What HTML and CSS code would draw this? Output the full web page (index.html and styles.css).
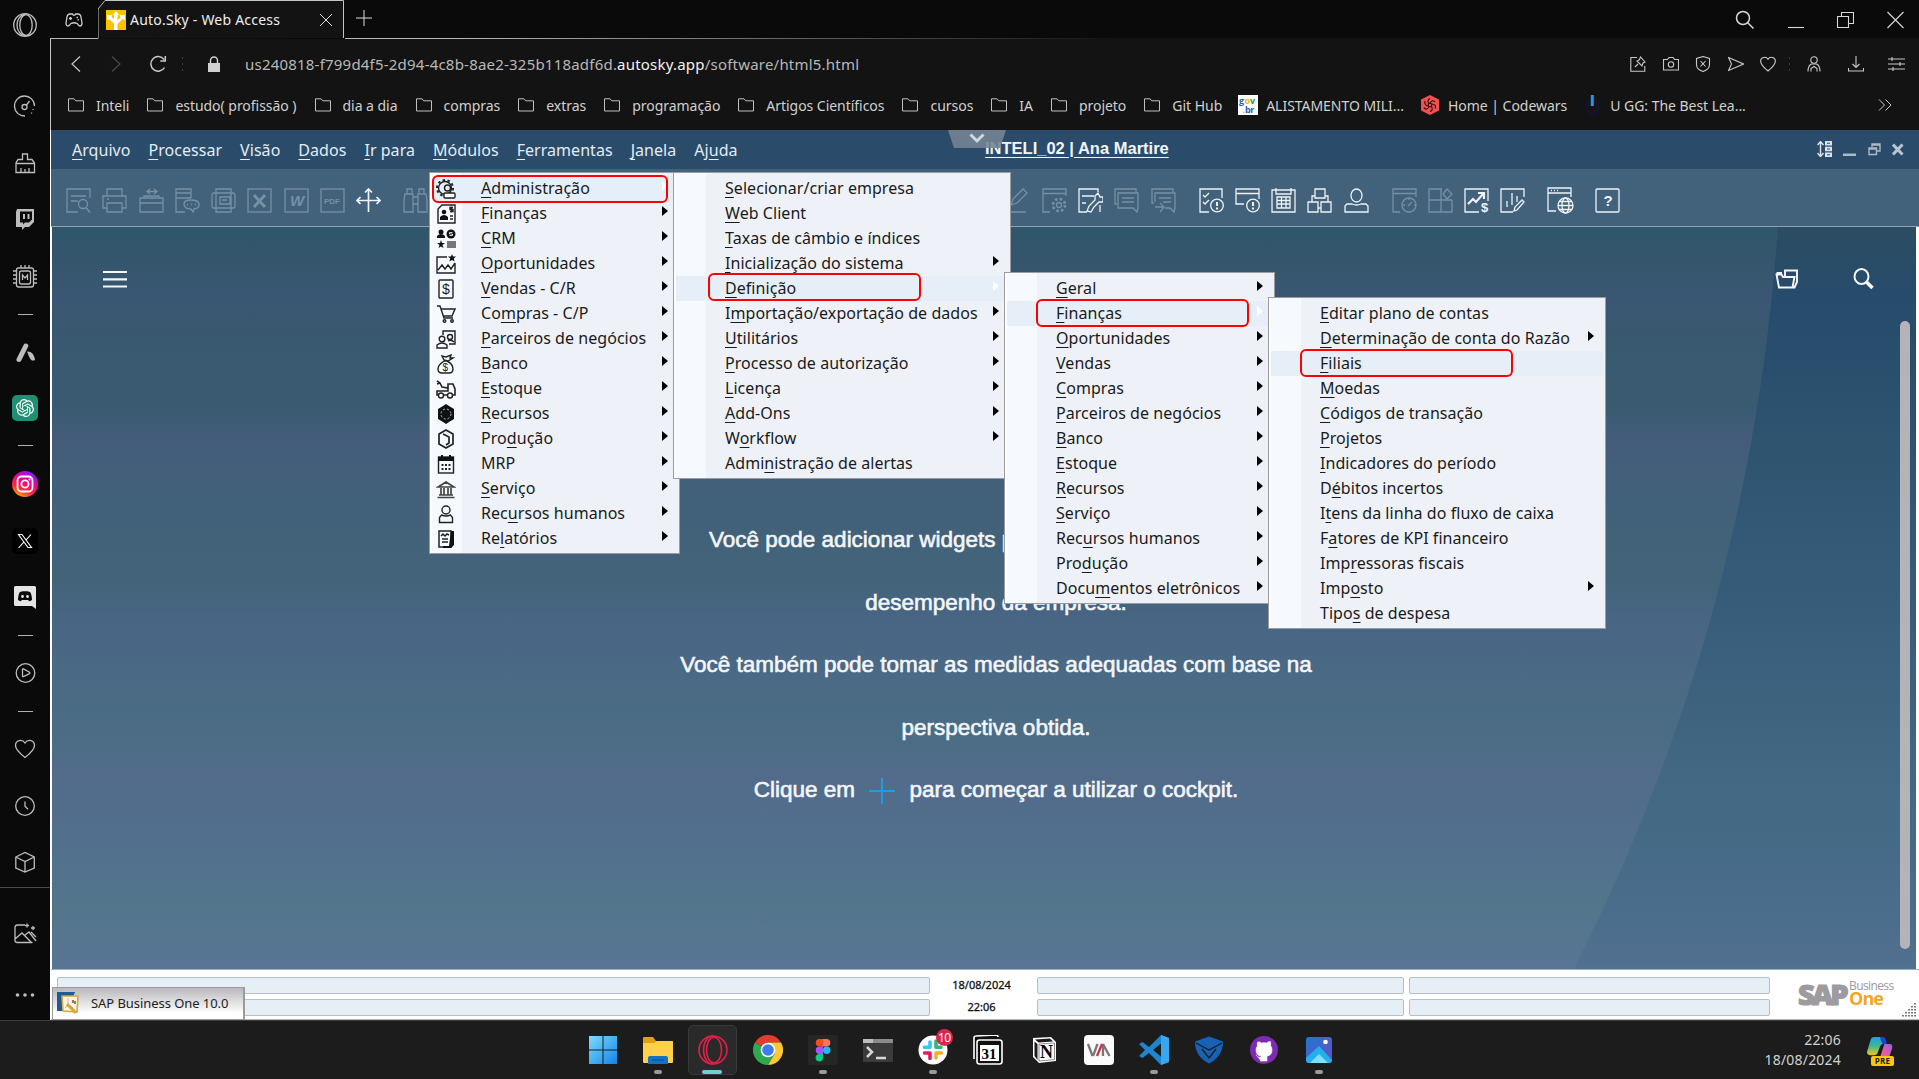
FILE: index.html
```html
<!DOCTYPE html>
<html lang="pt-BR">
<head>
<meta charset="utf-8">
<title>Auto.Sky - Web Access</title>
<link rel="stylesheet" href="styles.css">
</head>
<body>
<svg class="defs" width="0" height="0">
  <defs>
    <symbol id="folder" viewBox="0 0 16 14"><path d="M.5 13V.8h5.6l1.6 2h7.8V13z"/></symbol>
  </defs>
</svg>
<div class="screen">
  <aside class="rail">
    <svg class="ri first" viewBox="0 0 24 24"><circle cx="12" cy="12" r="11.3"/><ellipse cx="13" cy="12" rx="6.2" ry="10.4"/><path d="M12 1.500a8 10.500 0 0 0 0 21"/></svg>
    <svg class="ri gauge" viewBox="0 0 24 24"><path d="M12 22A10 10 0 1 1 21.500 12M20 15v1M18.500 18.500v1"/><circle cx="11.500" cy="13" r="2.500"/><path d="M13.500 11l3-4"/></svg>
    <svg class="ri" viewBox="0 0 24 24"><path d="M3 21.500V12l2-3.500h4.500V3h5v5.500H19l2.500 3.500v9.500zM3 12.500h18M8 21v-4M12 21v-3M16 21v-4"/></svg>
    <svg class="ri twitch" viewBox="0 0 24 24"><path class="f" d="M4 2h17v13l-5 5h-4l-3 3v-3H3V5z"/><path class="k" d="M7 4.500h12v8l-3 3h-4l-2 2v-2H7z"/><path class="b" d="M11 7v5M15.500 7v5"/></svg>
    <svg class="ri cpu" viewBox="0 0 24 24"><rect x="3.500" y="3" width="17" height="19" rx="2"/><rect x="6.500" y="6" width="11" height="13" rx="2"/><path d="M9.500 15v-5l2.500 3 2.500-3v5M0 6h3M0 10h3M0 14h3M0 18h3M21 6h3M21 10h3M21 14h3M21 18h3M8 3V0M12 3V0M16 3V0"/></svg>
    <i class="sep"></i>
    <svg class="ri" viewBox="0 0 24 24"><path d="M6 19.500L12.800 6" stroke-width="5" stroke-linecap="round"/><path class="f" d="M14 11.500c4-.5 7.500 3 8 8.500-4 2-5-1-8-8.500z"/></svg>
    <svg class="ri big chat" viewBox="0 0 26 26"><rect class="gpt" width="26" height="26" rx="5"/><path transform="translate(4 4) scale(.75)" fill="#fff" stroke="none" d="M22.2819 9.8211a5.9847 5.9847 0 0 0-.5157-4.9108 6.0462 6.0462 0 0 0-6.5098-2.9A6.0651 6.0651 0 0 0 4.9807 4.1818a5.9847 5.9847 0 0 0-3.9977 2.9 6.0462 6.0462 0 0 0 .7427 7.0966 5.98 5.98 0 0 0 .511 4.9107 6.051 6.051 0 0 0 6.5146 2.9001A5.9847 5.9847 0 0 0 13.2599 24a6.0557 6.0557 0 0 0 5.7718-4.2058 5.9894 5.9894 0 0 0 3.9977-2.9001 6.0557 6.0557 0 0 0-.7475-7.0729zm-9.022 12.6081a4.4755 4.4755 0 0 1-2.8764-1.0408l.1419-.0804 4.7783-2.7582a.7948.7948 0 0 0 .3927-.6813v-6.7369l2.02 1.1686a.071.071 0 0 1 .038.052v5.5826a4.504 4.504 0 0 1-4.4945 4.4944zm-9.6607-4.1254a4.4708 4.4708 0 0 1-.5346-3.0137l.142.0852 4.783 2.7582a.7712.7712 0 0 0 .7806 0l5.8428-3.3685v2.3324a.0804.0804 0 0 1-.0332.0615L9.74 19.9502a4.4992 4.4992 0 0 1-6.1408-1.6464zM2.3408 7.8956a4.485 4.485 0 0 1 2.3655-1.9728V11.6a.7664.7664 0 0 0 .3879.6765l5.8144 3.3543-2.0201 1.1685a.0757.0757 0 0 1-.071 0l-4.8303-2.7865A4.504 4.504 0 0 1 2.3408 7.872zm16.5963 3.8558L13.1038 8.364 15.1192 7.2a.0757.0757 0 0 1 .071 0l4.8303 2.7913a4.4944 4.4944 0 0 1-.6765 8.1042v-5.6772a.79.79 0 0 0-.407-.667zm2.0107-3.0231l-.142-.0852-4.7735-2.7818a.7759.7759 0 0 0-.7854 0L9.409 9.2297V6.8974a.0662.0662 0 0 1 .0284-.0615l4.8303-2.7866a4.4992 4.4992 0 0 1 6.6802 4.66zM8.3065 12.863l-2.02-1.1638a.0804.0804 0 0 1-.038-.0567V6.0742a4.4992 4.4992 0 0 1 7.3757-3.4537l-.142.0805L8.704 5.459a.7948.7948 0 0 0-.3927.6813zm1.0976-2.3654l2.602-1.4998 2.6069 1.4998v2.9994l-2.5974 1.4997-2.6067-1.4997Z"/></svg>
    <i class="sep"></i>
    <svg class="ri big" viewBox="0 0 26 26"><defs><linearGradient id="ig" x1=".1" y1="1" x2=".6" y2="0"><stop offset="0" stop-color="#ffc400"/><stop offset=".35" stop-color="#ff2a3c"/><stop offset=".65" stop-color="#f6008c"/><stop offset="1" stop-color="#8a1cf6"/></linearGradient></defs><circle cx="13" cy="13" r="13" fill="url(#ig)" stroke="none"/><g class="w2"><rect x="5.500" y="5.500" width="15" height="15" rx="4"/><circle cx="13" cy="13" r="3.600"/></g><circle cx="17.500" cy="8.500" r="1" fill="#fff" stroke="none"/></svg>
    <svg class="ri big" viewBox="0 0 26 26"><rect width="26" height="26" rx="5" fill="#000" stroke="none"/><path class="w" d="M6.500 6.500h3.500l9.500 13H16zM19 6.500l-5.300 5.800M11.800 14.200l-5.300 5.800"/></svg>
    <svg class="ri disc" viewBox="0 0 24 24"><path d="M1 2.500Q1 1 2.500 1h19Q23 1 23 2.500V24l-4-3H2.500Q1 21 1 19.500z" fill="#e4e4e6" stroke="none"/><path d="M5 15c0-4 1-7 2-8 2-1 3-.8 5-.8s3-.2 5 .8c1 1 2 4 2 8-2 1.500-3 1.500-4 0H9c-1 1.500-2 1.500-4 0z" fill="#0a0a0a" stroke="none"/><circle cx="9.500" cy="11.500" r="1.400" fill="#e4e4e6" stroke="none"/><circle cx="14.500" cy="11.500" r="1.400" fill="#e4e4e6" stroke="none"/></svg>
    <i class="sep"></i>
    <svg class="ri" viewBox="0 0 24 24"><circle cx="12.500" cy="12" r="9.300"/><path d="M9.500 8.500q0-1 1-.6l6 3.300q.8.800 0 1.400l-6 3q-1 .4-1-.6z"/></svg>
    <i class="sep last"></i>
    <svg class="ri" viewBox="0 0 24 24"><path d="M12 20.500C5 15 2.500 12 2.500 8.500c0-5 6.500-7 9.500-2.500 3-4.500 9.500-2.500 9.500 2.500 0 3.500-2.500 6.500-9.500 12z"/></svg>
    <svg class="ri" viewBox="0 0 24 24"><circle cx="12" cy="12" r="9.300"/><path d="M12 7.500v4.800l3 3"/></svg>
    <svg class="ri cube" viewBox="0 0 24 24"><path d="M2.800 7L12 2.500 21.300 7v11L12 22 2.800 18zM2.800 7L12 11.500 21.300 7M12 11.500V22"/></svg>
    <i class="line"></i>
    <svg class="ri" viewBox="0 0 24 24"><path d="M12 4H4.500Q2 4 2 6.500v13Q2 21.500 4.500 21.500h15M2 18l7-6 9 9M12 14l4-3 7 9M14 2.500v4M12 4.500h4M20 5v4M18 7h4M18 11l5 5"/></svg>
    <svg class="ri dots" viewBox="0 0 24 24"><circle cx="4.500" cy="12" r="1.800"/><circle cx="12" cy="12" r="1.800"/><circle cx="19.500" cy="12" r="1.800"/></svg>
  </aside>

  <main class="main">
    <header class="chrome">
      <div class="tabs">
        <svg class="pad" viewBox="0 0 18 14"><path d="M5 1h2.500l.8 1.200h1.500L10.600 1H13q2.500 0 3 3l1 6q0 3-2 3-1.500 0-2.800-2.500-3-1.500-6.400 0Q4.500 13 3 13 1 13 1 10l1-6q.5-3 3-3zM4 5.500h3M5.500 4v3M11.500 4.500h1.500M12.500 6.800h1.500"/></svg>
        <div class="tab">
          <svg class="tabshape" viewBox="0 0 247 39"><path d="M0 38.500V9L7 .5h238.500V38" /></svg>
          <svg class="fav" viewBox="0 0 20 20"><rect width="20" height="20" fill="#fdc300"/><path d="M8 20v-6.500L3.500 9.500 1 10V5h5L5.500 7 8 9V5H6.500L10 1l3 4h-1.500v5l3-2L13.500 5H19v5l-2.500-1-5 5v6z" fill="#fff"/></svg>
          <span class="tabname">Auto.Sky - Web Access</span>
          <svg class="close" viewBox="0 0 14 14"><path d="M1 1l12 12M13 1L1 13"/></svg>
        </div>
        <svg class="plus" viewBox="0 0 16 16"><path d="M8 0v16M0 8h16"/></svg>
        <div class="wins">
          <svg width="20" height="20" viewBox="0 0 20 20"><circle cx="8" cy="8" r="6.500" stroke-width="1.500"/><path d="M12.500 12.500l6 6" stroke-width="1.500"/></svg>
          <svg width="16" height="20" viewBox="0 0 16 20"><path d="M0 17.500h16"/></svg>
          <svg width="17" height="18" viewBox="0 0 17 18"><path d="M.5 5.500h11v11H.5zM4.500 5V1.500h12v11H12"/></svg>
          <svg width="17" height="18" viewBox="0 0 17 18"><path d="M.5 1l16 16M16.500 1l-16 16"/></svg>
        </div>
      </div>
      <div class="addr">
        <svg class="back" viewBox="0 0 10 16"><path d="M9 .5L1 8l8 7.500"/></svg>
        <svg class="fwd" viewBox="0 0 10 16"><path d="M1 .5L9 8l-8 7.500"/></svg>
        <svg class="reload" viewBox="0 0 18 18"><path d="M15.500 12.500A7.300 7.300 0 1 1 15 4.500M16.300 1v5h-5"/></svg>
        <i class="vd"></i>
        <svg class="lock" viewBox="0 0 12 16"><path d="M0 7h12v9H0z" fill="#d0d0d0"/><path d="M2.500 7V4.500a3.500 3.500 0 0 1 7 0V7" fill="none" stroke="#d0d0d0" stroke-width="1.500"/></svg>
        <p class="url">us240818-f799d4f5-2d94-4c8b-8ae2-325b118adf6d.<b>autosky.app</b>/software/html5.html</p>
        <div class="acts">
          <svg viewBox="0 0 16 16"><path d="M7 1.500H.8v13.700h14V10M5 11l3-3M7 5l5 5 1-3 2-1-4.500-5L9.500 3.500z"/></svg>
          <svg viewBox="0 0 16 16"><path d="M.5 3.500h4l1.500-2h4l1.500 2h4V14H.5z"/><circle cx="8" cy="8.500" r="2.700"/></svg>
          <svg viewBox="0 0 16 16"><path d="M8 .5l6.500 2v6q0 5-6.500 7-6.500-2-6.500-7v-6zM5.500 5l5 5.500M10.500 5l-5 5.500"/></svg>
          <svg viewBox="0 0 16 16"><path d="M.5 1.500L15.500 8 .5 14.500 3.500 8z"/></svg>
          <svg viewBox="0 0 16 16"><path d="M8 15C2.500 10.500.6 8 .6 5.300.6 1 6 0 8 3.300 10 0 15.400 1 15.400 5.300 15.400 8 13.500 10.500 8 15z"/></svg>
          <i class="vd"></i>
          <svg class="user" viewBox="0 0 16 16"><circle cx="8" cy="4" r="3.200"/><path d="M2 15.500q0-6 3.500-7.500h5q3.500 1.500 3.500 7.500M5 15.500v-3l3-2 3 2v3"/></svg>
          <svg class="dl" viewBox="0 0 16 16"><path d="M8 0v11M4.500 8L8 11.500 11.500 8M.5 12v3h15v-3"/></svg>
          <svg class="sl" viewBox="0 0 17 16"><path d="M0 3h17M0 8h17M0 13h17M4 1v4M12 6v4M5 11v4"/></svg>
        </div>
      </div>
      <nav class="marks">
        <a><svg><use href="#folder"/></svg>Inteli</a>
        <a><svg><use href="#folder"/></svg>estudo( profissão )</a>
        <a><svg><use href="#folder"/></svg>dia a dia</a>
        <a><svg><use href="#folder"/></svg>compras</a>
        <a><svg><use href="#folder"/></svg>extras</a>
        <a><svg><use href="#folder"/></svg>programação</a>
        <a><svg><use href="#folder"/></svg>Artigos Científicos</a>
        <a><svg><use href="#folder"/></svg>cursos</a>
        <a><svg><use href="#folder"/></svg>IA</a>
        <a><svg><use href="#folder"/></svg>projeto</a>
        <a><svg><use href="#folder"/></svg>Git Hub</a>
        <a class="site"><svg class="gov" viewBox="0 0 20 20"><rect width="20" height="20" fill="#fff"/><text x="1" y="9" fill="#1f5fbf">g</text><text x="6.500" y="9" fill="#f2b705">o</text><text x="12" y="9" fill="#2a9b3a">v</text><text x="4.500" y="17.500" fill="#f2b705">.</text><text x="7" y="17.500" fill="#1f5fbf">br</text></svg>ALISTAMENTO MILI...</a>
        <a class="site"><svg class="cw" viewBox="0 0 20 20"><path d="M10 0l9 4.500v11L10 20l-9-4.500v-11z" fill="#f0504f"/><g fill="none" stroke="#2a0d0d" stroke-width="1.100"><circle cx="10" cy="10" r="1.800"/><path d="M10 8q3-4 5-1M12 9q5 1 3 4.500M11.500 11.500q2 4-1.500 5M9 12q-3 4-5 .5M8 11q-4-1-3-5M8.500 8.500Q7 5 10 3.500"/></g></svg>Home | Codewars</a>
        <a class="site"><svg class="ugg" viewBox="0 0 15 20"><path d="M2 6v8q0 5 5.500 5t5.500-5V6" fill="none" stroke="#14142e" stroke-width="2.500"/><path d="M5.800 0h3v11h-3z" fill="#159bf3"/></svg>U GG: The Best Lea...</a>
        <svg class="more" viewBox="0 0 14 12"><path d="M1 .5L6.500 6 1 11.500M7.500.5L13 6l-5.500 5.500"/></svg>
      </nav>
    </header>

    <section class="app">
      <div class="menubar">
        <a><u>A</u>rquivo</a><a><u>P</u>rocessar</a><a><u>V</u>isão</a><a><u>D</u>ados</a><a><u>I</u>r para</a><a><u>M</u>ódulos</a><a><u>F</u>erramentas</a><a><u>J</u>anela</a><a>Aj<u>u</u>da</a>
        <strong class="title">INTELI_02 | Ana Martire</strong>
        <svg class="notch" viewBox="0 0 58 18"><path d="M0 0h58l-6 18H6z" fill="#748494" fill-opacity=".88"/><path d="M22.500 4.500l6.500 6.500 6.500-6.500" fill="none" stroke="#cfd6dd" stroke-width="3"/></svg>
        <div class="appwin">
          <svg width="15" height="16" viewBox="0 0 15 16"><path d="M3.500 1v14M.5 4l3-3.500 3 3.500M.5 12l3 3.500 3-3.500" fill="none" stroke="#dde3e9" stroke-width="1.400"/><path d="M8 0h7v4.500H8zM8 5.800h7v4.500H8zM8 11.500h7v4.500H8z" fill="#dde3e9"/><path d="M10 2.200h3M10 8h3M10 13.800h3" stroke="#2a4c6a"/></svg>
          <svg width="13" height="16" viewBox="0 0 13 16"><path d="M0 12.500h13V15H0z" fill="#a9b9c8"/></svg>
          <svg width="13" height="14" viewBox="0 0 13 14"><path d="M1 6h7.500v6.500H1zM4 5V2h8v7H9M1 7h7M4 3h8" fill="none" stroke="#a9b9c8" stroke-width="1.400"/></svg>
          <svg width="12" height="13" viewBox="0 0 12 13"><path d="M1 1.500l9.500 10M10.500 1.500L1 11.500" stroke="#b9c6d2" stroke-width="3"/></svg>
        </div>
      </div>

      <div class="toolbar">
        <div class="tg g1">
          <svg viewBox="0 0 25 25"><path d="M24 10V1H1v23h11M5 8h15M5 13h7"/><circle cx="17" cy="16" r="4.500"/><path d="M20 19.500l4 5"/></svg>
          <svg viewBox="0 0 25 25"><path d="M5 8V1h15v7M5 20H1V8h23v12h-4M5 15h15v9H5zM5 11h2"/></svg>
          <svg viewBox="0 0 25 25"><path d="M1 10h23v14H1zM1 15h23M5 10V8h15v2M8 3.500h10M11 1L8 3.500 11 6M15 1l3 2.500L15 6"/></svg>
          <svg viewBox="0 0 25 25"><path d="M16 10V1H1v23h9M1 5h15M1 10h15"/><path d="M9 16q0-4 7-4t8 4-5 5l-1 3-2-3q-7 0-7-5zM12 16.500h1M16 16.500h1M20 16.500h1"/></svg>
          <svg viewBox="0 0 25 25"><path d="M5 5V1h15v4M3 5h19q2 0 2 3v10q0 2-2 2H3q-2 0-2-2V8q0-3 2-3zM5 5v19h15V5M9 9h10v7H9zM11 12h5"/></svg>
          <svg viewBox="0 0 25 25"><rect x="1" y="1" width="23" height="23"/><path d="M7 7l11 12M18 7L7 19" stroke-width="3"/></svg>
          <svg viewBox="0 0 25 25"><rect x="1" y="1" width="23" height="23"/><text class="ti" x="6" y="18" font-size="15">W</text></svg>
          <svg viewBox="0 0 25 25"><rect x="1" y="1" width="23" height="23"/><text class="tp" x="4" y="15.500" font-size="8">PDF</text></svg>
          <svg class="on" viewBox="0 0 25 25"><path d="M12.500 1v23M1 12.500h23M9 4.500L12.500 1 16 4.500M4.500 9L1 12.500 4.500 16M20.500 9l3.500 3.500-3.500 3.500" stroke-width="1.700"/></svg>
        </div>
        <div class="tg g2">
          <svg viewBox="0 0 25 25"><path d="M4 5V1h5v4M16 5V1h5v4M2 6h8v18H1V12zM15 6h8l1 6v12h-9zM10 9h5M10 16h5"/></svg>
        </div>
        <div class="tg g3">
          <svg viewBox="0 0 25 25"><path d="M5 17l2-6L17 1l4 4-10 10-6 2zM1 24h19"/></svg>
          <svg viewBox="0 0 25 25"><path d="M24 8V1H1v23h7M1 5.500h23"/><circle cx="17" cy="17" r="2.500"/><circle cx="17" cy="17" r="6" stroke-width="2.600" stroke-dasharray="2.500 2.200"/></svg>
          <svg class="on" viewBox="0 0 25 25"><path d="M20 4V1H1v23h8M4 8h12M4 15h4M20 5l-3 3v4l-6 6-2 5 4 1 3-5 5-5h4V9h-3zM22 24v-7"/></svg>
          <svg viewBox="0 0 25 25"><path d="M3 16H1V1h21v3M4 5h20v15l-1 4-4-4H4zM8 10h12M8 14h12"/></svg>
          <svg viewBox="0 0 25 25"><path d="M3 15H1V1h21v3M4 14V5h20v15l-1 4-4-4h-5M8 10h12M12 14h8M4 19h8M9 15l4 4-4 5"/></svg>
        </div>
        <div class="tg on g4">
          <svg viewBox="0 0 25 25"><path d="M23 10V1H1v23h9M4 7l2 2 4-4M4 14l2 2 4-4"/><circle cx="18" cy="17.500" r="6.300"/><path d="M18 14v4M18 19.500v2" stroke-width="2"/></svg>
          <svg viewBox="0 0 25 25"><path d="M24 11V1H1v15h8M1 5.500h23"/><circle cx="18" cy="17.500" r="6.300"/><path d="M18 14v4M18 19.500v2" stroke-width="2"/></svg>
          <svg viewBox="0 0 25 25"><path d="M1 2h23v22H1zM5 0v6h15V0M6 9h13v11H6zM6 12.500h13M6 16h13M10.500 9v11M15 9v11"/></svg>
          <svg viewBox="0 0 25 25"><path d="M8 1h10v9H8zM1 14h10v10H1zM14 14h10v10H14zM5 14V8h3M18 8h3v6M11 20h3"/></svg>
          <svg viewBox="0 0 25 25"><ellipse cx="12.500" cy="7.500" rx="5.500" ry="6.500"/><path d="M1 24v-6l2-2h5q4.500 2 9 0h5l2 2v6z"/></svg>
        </div>
        <div class="tg g5">
          <svg viewBox="0 0 25 25"><path d="M24 9V1H1v23h7M1 5.500h23"/><circle cx="17" cy="17" r="7"/><path d="M16 18l4-4M17 10v2M11 17h2M22 17h2"/></svg>
          <svg viewBox="0 0 25 25"><path d="M14 1H1v23h23V12M1 12h23M13 1v23M19 1l5 5-5 5-4-5z"/></svg>
          <svg class="on" viewBox="0 0 25 25"><path d="M24 13V1H1v23h14"/><path d="M4 16l5-5 3 3 7-8M14 5h6v6" stroke-width="2.200"/><text class="tp" x="17" y="24" font-size="13">$</text></svg>
          <svg class="on" viewBox="0 0 25 25"><path d="M24 9V1H1v23h12M7 19v-6M12 17V5M17 14V8M14 23l1-4 7-7 2 2-7 8z"/></svg>
        </div>
        <div class="tg on g6">
          <svg viewBox="0 0 27 27"><path d="M24 10V1H1v23h8M1 6h23M4 3.500h1M7 3.500h1M10 3.500h1"/><circle cx="18.500" cy="18.500" r="7.500"/><ellipse cx="18.500" cy="18.500" rx="3.500" ry="7.500"/><path d="M11 18.500h15M12.500 14.500h12M12.500 22.500h12"/></svg>
        </div>
        <div class="tg on g7">
          <svg viewBox="0 0 25 25"><rect x="1" y="1" width="23" height="23" rx="1"/><text class="tp" x="8.500" y="18" font-size="15">?</text></svg>
        </div>
      </div>

      <div class="cockpit">
        <svg class="shade" viewBox="0 0 400 742" preserveAspectRatio="none"><defs><linearGradient id="sh" x1="0" y1="0" x2="0" y2="1"><stop offset="0" stop-color="#2b4c62"/><stop offset=".1" stop-color="#264b6c"/><stop offset=".3" stop-color="#2f5470"/><stop offset=".5" stop-color="#375c7a"/><stop offset=".75" stop-color="#426883"/><stop offset=".92" stop-color="#496d8b"/><stop offset="1" stop-color="#52708f"/></linearGradient></defs><path d="M262 0Q234 395 58 742H400V0z" fill="url(#sh)"/></svg>
        <div class="ctop">
          <svg class="burger" viewBox="0 0 24 18"><path d="M0 2h24M0 9.300h24M0 16.500h24"/></svg>
          <svg class="cfold" viewBox="0 0 24 20"><path d="M4 18.500L1.500 5.500h5L8 8h11.500l-2 10.500zM1.500 4h5.500M10 7.500V1.500h12v11.500l-2.500 5.500h-2"/></svg>
          <svg class="csearch" viewBox="0 0 21 22"><ellipse cx="8.500" cy="8.500" rx="7" ry="7.500" stroke-width="2"/><path d="M13.500 14l6 6" stroke-width="3.500"/></svg>
        </div>
        <div class="hint">
          <p class="l1">Você pode adicionar widgets p</p>
          <p class="l2">desempenho da empresa.</p>
          <p>Você também pode tomar as medidas adequadas com base na</p>
          <p>perspectiva obtida.</p>
          <p>Clique em <svg viewBox="0 0 26 26"><path d="M13 0v26M0 13h26"/></svg> para começar a utilizar o cockpit.</p>
        </div>
        <i class="scroll"></i>
      </div>

      <footer class="status">
        <div class="fields">
          <i class="fa"></i><span>18/08/2024</span><i class="fb"></i><i class="fc"></i>
          <i class="fa"></i><span>22:06</span><i class="fb"></i><i class="fc"></i>
        </div>
        <div class="sap"><b>SAP</b><span>Business<em>One</em></span></div>
        <svg class="grip" viewBox="0 0 15 15"><path d="M13 1v14M10 4v11M7 7v8M4 10v5M1 13v2" /></svg>
        <div class="task"><svg viewBox="0 0 23 24"><path d="M0 1h18L16 6 6 20H0z" fill="#1f5a96"/><path d="M5 5h16l-1 16-14-1z" fill="#fbf6e6" stroke="#d9a73a" stroke-width="1.600"/><path d="M11 7v9M8 17q4-5 8 0" stroke="#b7b7b7" fill="none"/><path d="M15 9h2v3h-2z" fill="#e4553c"/><path d="M17 10h2v3h-2z" fill="#4aa64a"/><path d="M10 13l9 9" stroke="#d9a73a" stroke-width="3"/></svg>SAP Business One 10.0</div>
      </footer>
    </section>
  </main>

  <footer class="taskbar">
    <div class="apps">
      <span><svg viewBox="0 0 30 30"><defs><linearGradient id="wn" x2="1" y2="1"><stop offset="0" stop-color="#7fdcfb"/><stop offset="1" stop-color="#1184e8"/></linearGradient></defs><path d="M1 1h13.500v13.500H1zM15.500 1H29v13.500H15.500zM1 15.500h13.500V29H1zM15.500 15.500H29V29H15.500z" fill="url(#wn)"/></svg></span>
      <span class="run"><svg viewBox="0 0 30 30"><path d="M0 3q0-1 1-1h9l3 4h16q1 0 1 1v6H0z" fill="#e0a010"/><path d="M0 8h11l3-2h15q1 0 1 1v20q0 1-1 1H1q-1 0-1-1z" fill="#ffd04a"/><path d="M5 29v-6q0-2 2-2h16q2 0 2 2v6z" fill="#1273c4"/><path d="M9 25h12" stroke="#0b4c8a"/></svg></span>
      <span class="cur"><svg viewBox="0 0 30 30"><g fill="none" stroke="#e01f4b" stroke-width="1.600"><circle cx="15" cy="15" r="14"/><ellipse cx="16" cy="15" rx="7.500" ry="12.800"/><path d="M15 1a9.500 14 0 0 0 0 28"/></g></svg></span>
      <span><svg viewBox="0 0 30 30"><path d="M15 15L2 7.500A15 15 0 0 1 28 7.500H15z" fill="#e33b2e"/><path d="M15 15L2 7.500A15 15 0 0 0 15 30l6.500-11z" fill="#2da94f"/><path d="M15 7.500h13A15 15 0 0 1 15 30l6.500-11z" fill="#fcc934"/><circle cx="15" cy="15" r="7.300" fill="#fff"/><circle cx="15" cy="15" r="5.800" fill="#3b7ded"/></svg></span>
      <span class="run"><svg viewBox="0 0 30 30"><rect width="30" height="30" rx="2" fill="#262626"/><path d="M11.500 4H15v7.500h-3.500a3.750 3.750 0 0 1 0-7.500z" fill="#f24e1e"/><path d="M15 4h3.500a3.750 3.750 0 0 1 0 7.500H15z" fill="#ff7262"/><path d="M11.500 11.500H15V19h-3.500a3.750 3.750 0 0 1 0-7.500z" fill="#a259ff"/><circle cx="18.700" cy="15.200" r="3.700" fill="#1abcfe"/><path d="M11.500 19H15v3.700a3.700 3.700 0 1 1-3.500-3.700z" fill="#0acf83"/></svg></span>
      <span><svg viewBox="0 0 30 30"><path d="M0 4h30v23H0z" fill="#3b3b3b"/><path d="M0 4h30v4H0z" fill="#8b8b8b"/><path d="M0 4h10v4H0z" fill="#bdbdbd"/><path d="M4 12l5 5-5 5" fill="none" stroke="#d8d8d8" stroke-width="2.500"/><path d="M13 23h10" stroke="#d8d8d8" stroke-width="2.500"/></svg></span>
      <span class="run"><svg viewBox="0 0 30 30"><circle cx="15" cy="15" r="14.500" fill="#fff"/><g stroke-width="3.600" stroke-linecap="round" fill="none"><path d="M12 7v5M6.500 12.200H12" stroke="#36c5f0"/><path d="M18 6v6M18 12.200h5" stroke="#2eb67d"/><path d="M18 18v5M18 18h5.500" stroke="#ecb22e"/><path d="M12 18v5.500M6.500 18H12" stroke="#e01e5a"/></g></svg><b class="badge">10</b></span>
      <span><svg viewBox="0 0 30 30"><path d="M1 24V3q0-2 2-2l20-1q2 0 2 2" fill="#111" stroke="#fff" stroke-width="1.600"/><rect x="4" y="5" width="25" height="24" rx="2.500" fill="#111" stroke="#fff" stroke-width="1.600"/><rect x="7" y="10" width="19" height="16" fill="#fff"/><text class="s31" x="8.500" y="23.500">31</text></svg></span>
      <span><svg viewBox="0 0 30 30"><path d="M4 3l18-1 5 5v19L10 28l-6-6z" fill="#fff"/><path d="M6 4.500L21 3.500l3 3L9.500 7.500zM5.500 6.500L8.500 9v16L5.500 21z" fill="#1c1c1c"/><path d="M10 9l15.500-1v16.500L10 26z" fill="#fff" stroke="#1c1c1c" stroke-width=".5"/><text class="nn" x="11" y="23">N</text></svg></span>
      <span><svg viewBox="0 0 30 30"><rect width="30" height="30" rx="4" fill="#fafafa"/><g fill="none" stroke-width="2.300"><path d="M4 9l4.500 12M19 21V9l6.500 12" stroke="#777"/><path d="M13.500 9L9 21" stroke="#777"/><path d="M18 9l-5 12" stroke="#c8324a"/></g></svg></span>
      <span class="run"><svg viewBox="0 0 30 30"><path d="M22 0l8 3v24l-8 3L10 18l-6.500 5L0 21l6-6-6-6 3.500-2L10 12zM22 8.500L14 15l8 6.500z" fill="#1c86d1" fill-rule="evenodd"/><path d="M22 0l8 3v24l-8 3z" fill="#37a8ef"/></svg></span>
      <span><svg viewBox="0 0 30 30"><path d="M15 1.500l14 5q0 15-14 22Q1 21.500 1 6.500z" fill="#1762b5"/><path d="M2 8l13 7 13-7M8 14l7 9 7-9" fill="none" stroke="#1c1c1c" stroke-width="1.300"/></svg></span>
      <span><svg viewBox="0 0 30 30"><circle cx="15" cy="15" r="14" fill="#7d2bb0"/><path d="M12 26.500v-4.500q-4 1-5-2.500M12 26v-5q-5-.5-5-6 0-2.500 1.500-4-.6-2 .2-4Q11 6.500 12.500 8q2.500-.7 5 0 1.500-1.500 3.800-1.500.8 2 .2 4Q23 12 23 15q0 5.500-5 6v5z" fill="#fff" stroke="#fff" stroke-width=".6"/></svg></span>
      <span class="run"><svg viewBox="0 0 30 30"><defs><linearGradient id="ph" x2="1" y2="1"><stop offset="0" stop-color="#1f76d2"/><stop offset="1" stop-color="#6a4fc0"/></linearGradient></defs><rect x="2" y="2" width="26" height="26" rx="3" fill="url(#ph)"/><path d="M2 23l13-12 13 14q0 3-3 3H5q-3 0-3-3z" fill="#23b1ee"/><path d="M6 28l9-9 9 9z" fill="#7fe0fb"/><circle cx="21.500" cy="7" r="2.300" fill="#fff"/></svg></span>
    </div>
    <div class="clock"><time>22:06</time><time>18/08/2024</time></div>
    <div class="copilot"><svg viewBox="0 0 30 30"><defs><linearGradient id="c1" x2="0" y2="1"><stop offset="0" stop-color="#1f9df0"/><stop offset=".5" stop-color="#3fb98a"/><stop offset="1" stop-color="#f5c518"/></linearGradient><linearGradient id="c2" x1="1" x2="0" y2="1"><stop offset="0" stop-color="#9a5cf0"/><stop offset=".6" stop-color="#ee5c9c"/><stop offset="1" stop-color="#f88a4a"/></linearGradient></defs><path d="M8 0h9q3 0 4 4l1 4h-4q-2 0-3 3l-3 8q-1 2-4 2H4q-4 0-4-4L4 4q1-4 4-4z" fill="url(#c1)"/><path d="M15 0h3q3 0 4 4l1 4h-5l-2-4z" fill="#1746c8"/><path d="M20 8h6q4 0 3 5l-3 9q-1 4-5 4H12l3-2z" fill="url(#c2)"/></svg><b>PRE</b></div>
  </footer>

  <div class="menu m1">
    <a class="hi sub"><svg viewBox="0 0 20 20"><circle cx="9" cy="9" r="6.500"/><circle cx="9" cy="9" r="8" stroke-dasharray="2.500 2.500" stroke-width="2"/><circle cx="11.500" cy="9" r="3"/><rect x="8" y="14" width="11" height="5" rx="1" fill="#fff"/></svg><span><u>A</u>dministração</span></a>
    <a class="sub"><svg viewBox="0 0 20 20"><path d="M2 5l4-4h13v18H2z"/><circle class="bk" cx="8" cy="8" r="2.300"/><path class="bk" d="M4 16v-3q4-4 8 0v3z"/><path d="M14 12h3M14 15h3M17 3.500h-3v2h3v2h-3M15.500 2.500v6"/></svg><span><u>F</u>inanças</span></a>
    <a class="sub"><svg viewBox="0 0 20 20"><circle class="bk" cx="5" cy="3" r="2.500"/><path class="bk" d="M1 9V7q4-4 8 0v2z"/><circle class="bk" cx="15" cy="5" r="4.500"/><path d="M16.500 3.500h-3v1.500h3v1.500h-3" stroke="#fff" stroke-width=".8"/><path class="bk" d="M5 11l1 3h3l-2.500 2 1 3L5 17.500 2.500 19l1-3L1 14h3z"/><path d="M11 12h9v7h-9z" fill="#777" stroke="none"/></svg><span><u>C</u>RM</span></a>
    <a class="sub"><svg viewBox="0 0 20 20"><path d="M11 3H1v16h18V9M2 16l4-5 3 4 3-4 3 4 4-6"/><path class="bk" d="M16 0l1 2.500h3L17.800 4.500l.8 3L16 6l-2.600 1.500.8-3L12 2.500h3z"/></svg><span><u>O</u>portunidades</span></a>
    <a class="sub"><svg viewBox="0 0 20 20"><rect x="3" y="1" width="14" height="18" rx="1"/><text x="6" y="15" font-size="14">$</text></svg><span><u>V</u>endas - C/R</span></a>
    <a class="sub"><svg viewBox="0 0 20 20"><path d="M1 2h3l4 12h9M5 5h14l-3 7H7"/><circle cx="8.500" cy="17" r="1.300"/><circle cx="16" cy="17" r="1.300"/></svg><span>Co<u>m</u>pras - C/P</span></a>
    <a class="sub"><svg viewBox="0 0 20 20"><path d="M7 6V2h12v13h-6"/><circle cx="6" cy="10" r="2.800"/><path d="M1 19v-3q5-4 10 0v3z"/><circle cx="14" cy="8" r="2.500"/><path d="M12 12q3-2 6 1"/></svg><span><u>P</u>arceiros de negócios</span></a>
    <a class="sub"><svg viewBox="0 0 20 20"><path d="M8 6L6 2l4 1 5-2-1 3 3 0-5 3zM8 7Q2 11 2 15q0 4 4 4h7q4 0 4-4 0-5-6-8z"/><text x="6.500" y="17" font-size="10">$</text></svg><span><u>B</u>anco</span></a>
    <a class="sub"><svg viewBox="0 0 20 20"><path d="M1 2l3 2 2 4 6 1V5h5l2 5v6H1v-4h11V9M1 5l3-1" stroke-width="1.600"/><circle cx="5" cy="16.500" r="2.500" fill="#fff"/><circle cx="14" cy="16.500" r="2.500" fill="#fff"/></svg><span><u>E</u>stoque</span></a>
    <a class="sub"><svg viewBox="0 0 20 20"><path class="bk" d="M10 0l3 2 5 3v3l0 7-5 3-3 2-3-2-5-3V5l5-3z"/><circle cx="10" cy="10" r="5" stroke="#bbb" stroke-width="1" stroke-dasharray="2 2"/></svg><span><u>R</u>ecursos</span></a>
    <a class="sub"><svg viewBox="0 0 20 20"><path d="M10 1l7 4v10l-7 4-7-4V5zM7 5l6 3v6l-3 2" stroke-width="1.700"/></svg><span>Pro<u>d</u>ução</span></a>
    <a class="sub"><svg viewBox="0 0 20 20"><rect x="2.500" y="3" width="15" height="16"/><path class="bk" d="M2 3h16v4H2zM5 1h2v3H5zM13 1h2v3h-2z"/><path d="M5.500 11h9M5.500 15h9" stroke-width="2" stroke-dasharray="2 1.500"/></svg><span>MRP</span></a>
    <a class="sub"><svg viewBox="0 0 20 20"><path d="M2 8h16L10 3zM1.500 18.500h17M3 16h14M5 9v7M8 9v7M12 9v7M15 9v7" stroke-width="1.700" stroke="#444"/></svg><span><u>S</u>erviço</span></a>
    <a class="sub"><svg viewBox="0 0 20 20"><circle cx="10" cy="6" r="4"/><path d="M3.500 18.500v-5l2-2.500q4.500 2 9 0l2 2.500v5z"/></svg><span>Rec<u>u</u>rsos humanos</span></a>
    <a class="sub"><svg viewBox="0 0 20 20"><path d="M3 2h12v16H3zM6 10h6M6 13h6M5 7l2-2 2 2 2-2 2 1" stroke-width="1.500"/><path class="bk" d="M15 2h3v14l-3 3H7v-2h6z"/></svg><span>Re<u>l</u>atórios</span></a>
    <i class="mark k1"></i>
  </div>
  <div class="menu m2">
    <a><span><u>S</u>elecionar/criar empresa</span></a>
    <a><span><u>W</u>eb Client</span></a>
    <a><span><u>T</u>axas de câmbio e índices</span></a>
    <a class="sub"><span><u>I</u>nicialização do sistema</span></a>
    <a class="hi sub"><span><u>D</u>efinição</span></a>
    <a class="sub"><span>I<u>m</u>portação/exportação de dados</span></a>
    <a class="sub"><span><u>U</u>tilitários</span></a>
    <a class="sub"><span><u>P</u>rocesso de autorização</span></a>
    <a class="sub"><span><u>L</u>icença</span></a>
    <a class="sub"><span><u>A</u>dd-Ons</span></a>
    <a class="sub"><span>W<u>o</u>rkflow</span></a>
    <a><span>Admi<u>n</u>istração de alertas</span></a>
    <i class="mark k2"></i>
  </div>
  <div class="menu m3">
    <a class="sub"><span><u>G</u>eral</span></a>
    <a class="hi sub"><span><u>F</u>inanças</span></a>
    <a class="sub"><span><u>O</u>portunidades</span></a>
    <a class="sub"><span><u>V</u>endas</span></a>
    <a class="sub"><span><u>C</u>ompras</span></a>
    <a class="sub"><span><u>P</u>arceiros de negócios</span></a>
    <a class="sub"><span><u>B</u>anco</span></a>
    <a class="sub"><span><u>E</u>stoque</span></a>
    <a class="sub"><span><u>R</u>ecursos</span></a>
    <a class="sub"><span><u>S</u>erviço</span></a>
    <a class="sub"><span>Rec<u>u</u>rsos humanos</span></a>
    <a class="sub"><span>Pro<u>d</u>ução</span></a>
    <a class="sub"><span>Docu<u>m</u>entos eletrônicos</span></a>
    <i class="mark k3"></i>
  </div>
  <div class="menu m4">
    <a><span><u>E</u>ditar plano de contas</span></a>
    <a class="sub"><span><u>D</u>eterminação de conta do Razão</span></a>
    <a class="hi"><span><u>F</u>iliais</span></a>
    <a><span><u>M</u>oedas</span></a>
    <a><span><u>C</u>ódigos de transação</span></a>
    <a><span><u>P</u>rojetos</span></a>
    <a><span><u>I</u>ndicadores do período</span></a>
    <a><span>D<u>é</u>bitos incertos</span></a>
    <a><span>I<u>t</u>ens da linha do fluxo de caixa</span></a>
    <a><span>F<u>a</u>tores de KPI financeiro</span></a>
    <a><span>Imp<u>r</u>essoras fiscais</span></a>
    <a class="sub"><span>Imp<u>o</u>sto</span></a>
    <a><span>Tipo<u>s</u> de despesa</span></a>
    <i class="mark k4"></i>
  </div>
</div>
</body>
</html>
```

FILE: styles.css
```css
* { box-sizing: border-box; }
body { margin: 0; background: #0a0a0a; font-family: "Noto Sans", "Open Sans", sans-serif; }
p { margin: 0; }
svg { display: block; flex: none; }
.defs { position: absolute; }
.screen {
  position: relative; width: 1919px; height: 1079px; overflow: hidden;
  display: grid; grid-template-columns: 50px 1fr; grid-template-rows: 1020px 59px;
}

/* Left rail */
.rail { background: #0a0a0a; display: flex; flex-direction: column; align-items: center; }
.ri { width: 24px; height: 24px; margin-top: 33px; fill: none; stroke: #bdbdbd; stroke-width: 1.3; }
.ri.first { margin-top: 13px; }
.ri.gauge { margin-top: 57px; }
.ri.twitch { margin-top: 32px; }
.ri.cpu { margin-top: 34px; }
.ri.big { width: 26px; height: 26px; margin: 32px 0 -1px; }
.ri.chat { margin-top: 31px; }
.ri.disc { margin-top: 32px; margin-bottom: 1px; }
.ri.cube { margin-top: 32px; }
.ri .f, .ri.dots circle { fill: #bdbdbd; stroke: none; }
.ri .k { fill: #0a0a0a; stroke: none; }
.ri .b { stroke-width: 2; }
.ri .gpt { fill: #1f9073; stroke: none; }
.ri .w { stroke: #fff; stroke-width: 1.1; }
.ri .w2 { stroke: #fff; stroke-width: 1.8; }
.sep { width: 15px; height: 1px; background: #b0b0b0; margin: 25px 0; flex: none; }
.sep.last { margin-top: 26px; }
.sep + .ri { margin-top: 0; }
.line { width: 50px; height: 1px; background: #4a4a4a; margin: 13px 0 0; flex: none; }
.ri.dots { margin-top: 38px; }

/* Browser chrome */
.main { display: flex; flex-direction: column; min-width: 0; }
.chrome { height: 130px; background: #131313; color: #d0d0d0; border-left: 1px solid #c4c4c4; flex: none; }
.tabs {
  height: 39px; margin-left: -1px; background: #0a0a0a; display: flex; align-items: center;
  background-image: linear-gradient(90deg, #b9b9b9 0 48px, transparent 48px 295px, #b9b9b9 295px 400px, #131313 1060px);
  background-size: 100% 1px; background-position: 0 38px; background-repeat: no-repeat;
}
.pad { width: 18px; height: 14px; margin: 0 15px; fill: none; stroke: #cfcfcf; stroke-width: 1.3; }
.tab { position: relative; width: 247px; height: 39px; display: flex; align-items: center; padding: 0 12px 0 8px; color: #eee; }
.tabshape { position: absolute; left: 0; top: 0; width: 247px; height: 39px; fill: #131313; stroke: #c4c4c4; }
.fav { position: relative; width: 20px; height: 20px; margin-right: 4px; }
.tabname { position: relative; font-size: 14px; letter-spacing: .22px; white-space: nowrap; }
.close { position: relative; width: 14px; height: 14px; margin-left: auto; stroke: #ddd; }
.plus { width: 16px; height: 16px; margin: -3px 0 0 11px; stroke: #ddd; }
.wins { margin: 0 15px 0 auto; display: flex; align-items: center; fill: none; stroke: #d8d8d8; stroke-width: 1.1; }
.wins svg + svg { margin-left: 33px; }
.addr { height: 49px; display: flex; align-items: center; fill: none; stroke: #c8c8c8; stroke-width: 1.2; padding-top: 1px; }
.back { width: 10px; height: 16px; margin-left: 20px; }
.fwd { width: 10px; height: 16px; margin-left: 30px; stroke: #4a4a4a; }
.reload { width: 18px; height: 18px; margin-left: 28px; stroke-width: 1.5; }
.vd { width: 1px; height: 14px; background: repeating-linear-gradient(#3c3c3c 0 2px, transparent 2px 6px); }
.addr > .vd { margin-left: 15px; }
.lock { width: 12px; height: 16px; margin-left: 25px; stroke: none; }
.url { margin-left: 25px; font-size: 15px; letter-spacing: .21px; color: #b8b8b8; white-space: nowrap; }
.url b { font-weight: 400; color: #f2f2f2; }
.acts { margin: 0 14px 0 auto; display: flex; align-items: center; gap: 16.500px; }
.acts svg { width: 16px; height: 16px; stroke-width: 1.1; }
.acts .vd { margin: 0 -2px 0 -4px; }
.acts .user { margin-left: 2px; }
.acts .dl { margin-left: 9px; }
.acts .sl { width: 17px; margin-left: 8px; }
.marks { height: 34px; display: flex; align-items: center; padding-left: 17px; font-size: 14px; letter-spacing: -.035px; white-space: nowrap; }
.marks a { display: flex; align-items: center; margin-right: 18px; }
.marks a svg { width: 16px; height: 14px; margin-right: 12px; fill: none; stroke: #c0c0c0; }
.marks a.site svg { height: 20px; width: 20px; margin-right: 8px; margin-left: -2px; stroke: none; }
.marks a.site .ugg { width: 15px; margin: 0 10px 0 0; }
.marks .gov text { font: 700 9px "Open Sans", sans-serif; letter-spacing: -.5px; }
.more { width: 14px; height: 12px; margin: 0 27px 0 auto; fill: none; stroke: #c8c8c8; }

/* Remote application */
.app { height: 890px; display: flex; flex-direction: column; background: #fff; padding-left: 1px; }
.menubar { position: relative; height: 39px; background: #2a4c6a; color: #e3ebf3; display: flex; align-items: center; gap: 18px; padding: 1px 15px 0 21px; font-size: 16px; letter-spacing: .04px; white-space: nowrap; flex: none; }
.menubar u { text-underline-offset: 3px; }
.title { position: absolute; left: 934px; top: 8px; font: 700 16.500px/21px "Liberation Sans", Arial, sans-serif; letter-spacing: 0; text-decoration: underline; text-underline-offset: 3px; color: #f2f5f8; }
.notch { position: absolute; left: 897px; top: 0; width: 58px; height: 18px; }
.appwin { margin-left: auto; display: flex; align-items: center; gap: 11.500px; margin-top: -2px; }
.toolbar { height: 58px; background: #42617b; border-bottom: 1px solid #93a2b1; display: flex; align-items: center; padding: 6px 0 0 15px; flex: none; }
.tg { display: flex; gap: 11.250px; }
.tg svg { width: 25px; height: 25px; fill: none; stroke: #7890a4; stroke-width: 1.3; }
.tg.on svg, .tg svg.on { stroke: #eef3f7; }
.tg text { font-family: "Liberation Sans", Arial, sans-serif; font-weight: 700; stroke: none; fill: #7890a4; }
.tg .ti { font-style: italic; }
.tg .on text, .tg.on text { fill: #eef3f7; }
.g2 { margin-left: 21.500px; }
.g3 { margin-left: 578px; }
.g4 { margin-left: 23px; }
.g5 { margin-left: 23px; }
.g6 { margin-left: 21.500px; }
.tg.g6 svg { width: 27px; height: 27px; }
.g7 { margin-left: 21px; }
.cockpit {
  position: relative; height: 742px; margin: 0 3px 0 1px; color: #f3f6fa; flex: none;
  background: linear-gradient(#2f566a 0, #37566f 50px, #3b5674 72px, #39586f 100px, #395b71 180px, #445c7a 212px, #42607a 262px, #426479 355px, #486583 390px, #4a6985 440px, #4b6d84 512px, #526b8b 545px, #52718e 630px, #53768b 685px, #597596 742px);
}
.shade { position: absolute; right: 0; top: 0; width: 400px; height: 742px; }
.ctop { position: relative; height: 100px; display: flex; align-items: center; padding: 3px 42px 0 51px; fill: none; stroke: #f6f6f8; }
.burger { width: 24px; height: 18px; stroke-width: 2.2; margin-right: auto; }
.cfold { width: 24px; height: 20px; stroke-width: 1.900; margin-right: 54px; }
.csearch { width: 21px; height: 22px; }
.hint { position: relative; width: 1888px; margin-top: 182px; text-align: center; font: 22.500px/62.600px "Liberation Sans", Arial, sans-serif; -webkit-text-stroke: .6px #f3f6fa; white-space: nowrap; }
.hint .l1 { text-align: left; padding-left: 657px; }
.hint svg { display: inline-block; width: 26px; height: 26px; vertical-align: -7px; margin: 0 8px; stroke: #1f9be8; stroke-width: 2; }
.scroll { position: absolute; right: 6px; top: 94px; width: 10px; height: 628px; border-radius: 5px; background: #b5b3b8; }
.status { position: relative; height: 51px; background: #fff; border-top: 1px solid #9fb0c0; border-bottom: 1px solid #b5b5b8; display: flex; padding: 7px 3px 0 6px; flex: none; }
.fields { display: grid; grid-template-columns: 873px 107px 367px 361px; grid-template-rows: 17px 17px; row-gap: 5px; column-gap: 0; height: 39px; }
.fields i { background: #e6eef6; border: 1px solid #b4bfc7; border-radius: 2px; }
.fields .fc { margin-left: 5px; margin-right: -5px; }
.fields span { font: 11px/15px "Noto Sans", sans-serif; color: #111; text-align: center; -webkit-text-stroke: .3px #111; padding-right: 4px; }
.sap { display: flex; margin: 1px 0 0 33px; color: #9d9ba0; }
.sap b { font: 800 29px/30px "Open Sans", sans-serif; letter-spacing: -2.800px; -webkit-text-stroke: 1.2px #9d9ba0; width: 51px; margin-top: 1px; }
.sap span { font: 12px/12px "Open Sans", sans-serif; letter-spacing: -.6px; margin-top: 2px; }
.sap em { display: block; font: 700 18px/15px "Open Sans", sans-serif; color: #f3a71f; letter-spacing: -.9px; margin-top: -1px; }
.grip { position: absolute; right: 2px; bottom: 2px; width: 15px; height: 15px; stroke: #555; stroke-width: 1.6; stroke-dasharray: 1.600 1.400; }
.task { position: absolute; left: 1px; top: 17px; width: 193px; height: 33px; border: 1px solid #9c9a9f; border-right-width: 2px; background: linear-gradient(#b9b7bb, #fff 80%); display: flex; align-items: center; padding: 0 0 1px 4px; font-size: 13px; letter-spacing: -.06px; color: #222; white-space: nowrap; }
.task svg { width: 23px; height: 24px; margin-right: 11px; }

/* Windows taskbar */
.taskbar { grid-column: 1 / 3; background: #1c1c1c; border-top: 1px solid #3c3c3c; display: flex; position: relative; }
.apps { display: flex; padding-left: 578px; gap: 6.150px; }
.apps span { position: relative; width: 49px; height: 50px; margin-top: 4px; display: grid; place-items: center; }
.apps svg { width: 30px; height: 30px; }
.run::after, .cur::after { content: ""; position: absolute; bottom: 1px; left: 20.500px; width: 8px; height: 4px; border-radius: 2px; background: #9a9a9a; }
.apps .cur { background: #2a2a2a; border: 1px solid #3a3a3a; border-radius: 5px; }
.cur::after { left: 13px; bottom: 0; width: 20px; background: #70d0d8; }
.badge { position: absolute; left: 27px; top: 4px; width: 17px; height: 17px; border-radius: 9px; background: #d8274f; color: #fff; font: 12px/17px "Noto Sans", sans-serif; text-align: center; letter-spacing: -.5px; }
.s31 { font: 700 15px "Liberation Serif", serif; }
.nn { font: 700 18px "Liberation Serif", serif; }
.clock { margin: 9px 24px 0 auto; text-align: right; color: #d2d2d2; font-size: 14px; line-height: 20px; letter-spacing: .2px; }
.clock time { display: block; }
.copilot { position: relative; width: 30px; height: 30px; margin: 16px 24px 0 0; }
.copilot svg { width: 30px; height: 26px; }
.copilot b { position: absolute; left: 6px; bottom: 1px; width: 23px; height: 10px; border-radius: 2px; background: #f8c80c; color: #222; font: 700 8px/10px "Open Sans", sans-serif; text-align: center; letter-spacing: .3px; }

/* Cascading menus */
.menu { position: absolute; padding: 3px 2px 2px; border: 1px solid #9a9ba3; color: #1a1a1a; font-size: 16px; letter-spacing: .05px; background: linear-gradient(90deg, #fff 0 2px, #f6f9fe 2px 32px, #eef2f8 32px); }
.menu a { position: relative; display: flex; align-items: center; height: 25px; padding: 0 0 2px 49px; white-space: nowrap; }
.menu a svg { position: absolute; left: 4px; top: 3px; width: 20px; height: 20px; fill: none; stroke: #222; stroke-width: 1.4; }
.menu a svg text { fill: #222; stroke: none; font-family: "Liberation Sans", Arial, sans-serif; }
.menu .bk { fill: #111; stroke: none; }
.menu u { text-underline-offset: 3px; text-decoration-thickness: 1px; }
.menu .hi { background: #e6eff7; }
.sub::after { content: ""; position: absolute; right: 9px; top: 5px; border: 5px solid transparent; border-left: 6px solid #000; border-right: 0; }
.hi.sub::after { border-left-color: #fff; }
.m1 { left: 429px; top: 172px; width: 251px; }
.m2 { left: 673px; top: 172px; width: 338px; }
.m3 { left: 1004px; top: 272px; width: 271px; }
.m4 { left: 1268px; top: 297px; width: 338px; }
.mark { position: absolute; border: 2px solid #f00; border-radius: 6px; height: 28px; }
.k1 { left: 2px; top: 2px; width: 236px; }
.k2 { left: 34px; top: 100px; width: 213px; }
.k3 { left: 31px; top: 26px; width: 213px; }
.k4 { left: 31px; top: 51px; width: 213px; }
```
